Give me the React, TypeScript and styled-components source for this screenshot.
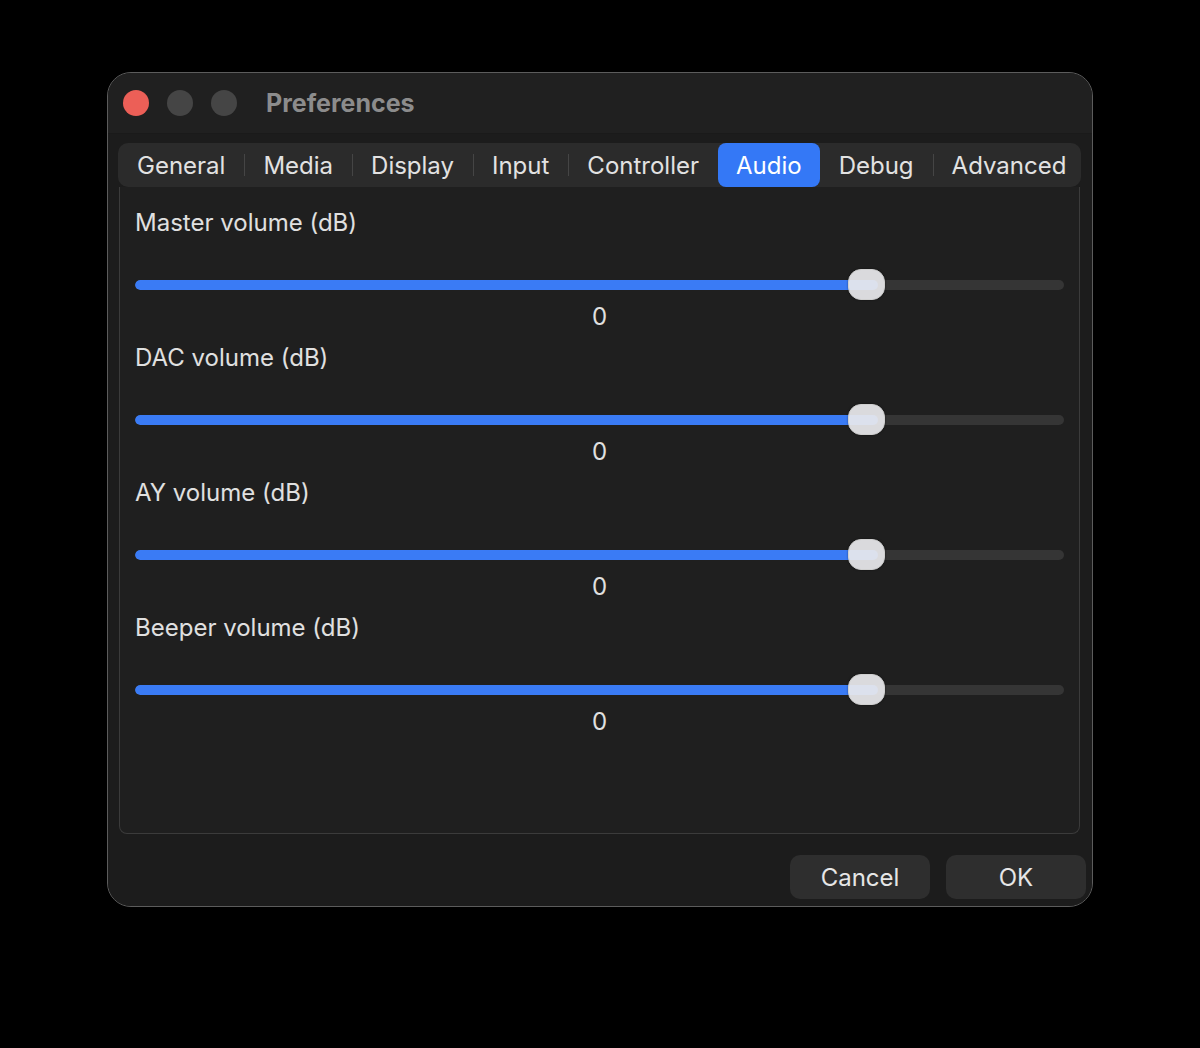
import React from "react";
import styled, { createGlobalStyle } from "styled-components";

const GlobalStyle = createGlobalStyle`
  body {
    margin: 0;
    background: #000;
    font-family: Inter, "Noto Sans", sans-serif;
  }
`;

const Page = styled.div`
  width: 1200px;
  height: 1048px;
  padding: 72px 0 0 107px;
  box-sizing: border-box;
`;

const Window = styled.div`
  width: 986px;
  height: 835px;
  box-sizing: border-box;
  border: 1px solid #5c5c5c;
  border-radius: 24px;
  background: #1e1e1e;
  overflow: hidden;
  display: flex;
  flex-direction: column;
`;

const TitleBar = styled.div`
  height: 60px;
  flex-shrink: 0;
  display: flex;
  align-items: center;
  padding-left: 15px;
  background: #202020;
  border-bottom: 1px solid #1a1a1a;
`;

const Light = styled.span<{ $color: string }>`
  width: 26px;
  height: 26px;
  border-radius: 50%;
  background: ${(p) => p.$color};
  margin-right: 18px;
`;

const Title = styled.div`
  margin-left: 11px;
  font-size: 25px;
  font-weight: 700;
  color: #8c8c8c;
`;

const Body = styled.div`
  flex: 1;
  display: flex;
  flex-direction: column;
  padding: 9px 11px 0 10px;
  background: #1c1c1c;
`;

const TabBar = styled.div`
  height: 44px;
  flex-shrink: 0;
  display: flex;
  align-items: stretch;
  background: #2b2b2b;
  border-radius: 10px;
`;

const Tab = styled.div<{ $active?: boolean; $sep?: boolean }>`
  position: relative;
  display: flex;
  align-items: center;
  padding: 0 ${(p) => (p.$active ? "18px" : "19px")};
  font-size: 24px;
  color: ${(p) => (p.$active ? "#ffffff" : "#e2e2e2")};
  background: ${(p) => (p.$active ? "#3478f6" : "transparent")};
  border-radius: 8px;
  &::before {
    content: "";
    display: ${(p) => (p.$sep ? "block" : "none")};
    position: absolute;
    left: 0;
    top: 11px;
    bottom: 11px;
    width: 1px;
    background: #454545;
  }
`;

const Panel = styled.div`
  height: 647px;
  margin: 0 1px;
  box-sizing: border-box;
  border: 1px solid #3b3b3b;
  border-top: none;
  border-radius: 0 0 8px 8px;
  background: #1f1f1f;
  padding: 21px 15px 0 15px;
  display: flex;
  flex-direction: column;
`;

const Row = styled.div`
  display: flex;
  flex-direction: column;
  padding-bottom: 11px;
`;

const Label = styled.div`
  height: 30px;
  line-height: 30px;
  font-size: 24px;
  color: #e0e0e0;
`;

const SliderBox = styled.div`
  position: relative;
  height: 34px;
  margin-top: 30px;
  display: flex;
  align-items: center;
`;

const Track = styled.div`
  position: relative;
  width: 100%;
  height: 10px;
  border-radius: 5px;
  background: #353535;
  overflow: hidden;
`;

const Fill = styled.div`
  height: 100%;
  background: #3a7bf5;
  border-radius: 5px;
`;

const Thumb = styled.div`
  position: absolute;
  top: 1px;
  width: 37px;
  height: 31px;
  box-sizing: border-box;
  border-radius: 13px;
  background: rgba(232, 232, 236, 0.93);
  border: 1px solid #cfcfcf;
  box-shadow: 0 0 2px rgba(0, 0, 0, 0.5);
`;

const Value = styled.div`
  height: 30px;
  line-height: 30px;
  text-align: center;
  font-size: 24px;
  color: #e0e0e0;
`;

const Footer = styled.div`
  display: flex;
  justify-content: flex-end;
  gap: 16px;
  margin: 21px -5px 0 0;
`;

const Button = styled.button`
  width: 140px;
  height: 44px;
  border: none;
  border-radius: 10px;
  background: #2e2e2e;
  color: #e6e6e6;
  font-family: inherit;
  font-size: 24px;
`;

const tabs = ["General", "Media", "Display", "Input", "Controller", "Audio", "Debug", "Advanced"];
const active = "Audio";

const sliders = [
  "Master volume (dB)",
  "DAC volume (dB)",
  "AY volume (dB)",
  "Beeper volume (dB)",
];

const Slider = ({ fill, thumb }: { fill: number; thumb: number }) => (
  <SliderBox>
    <Track>
      <Fill style={{ width: `${fill}%` }} />
    </Track>
    <Thumb style={{ left: `${thumb}%` }} />
  </SliderBox>
);

export default function App() {
  return (
    <>
      <GlobalStyle />
      <Page>
        <Window>
          <TitleBar>
            <Light $color="#ec5f57" />
            <Light $color="#454545" />
            <Light $color="#454545" />
            <Title>Preferences</Title>
          </TitleBar>
          <Body>
            <TabBar>
              {tabs.map((t, i) => {
                const prev = tabs[i - 1];
                const sep = i > 0 && t !== active && prev !== active;
                return (
                  <Tab key={t} $active={t === active} $sep={sep}>
                    {t}
                  </Tab>
                );
              })}
            </TabBar>
            <Panel>
              {sliders.map((s) => (
                <Row key={s}>
                  <Label>{s}</Label>
                  <Slider fill={80} thumb={76.8} />
                  <Value>0</Value>
                </Row>
              ))}
            </Panel>
            <Footer>
              <Button>Cancel</Button>
              <Button>OK</Button>
            </Footer>
          </Body>
        </Window>
      </Page>
    </>
  );
}
